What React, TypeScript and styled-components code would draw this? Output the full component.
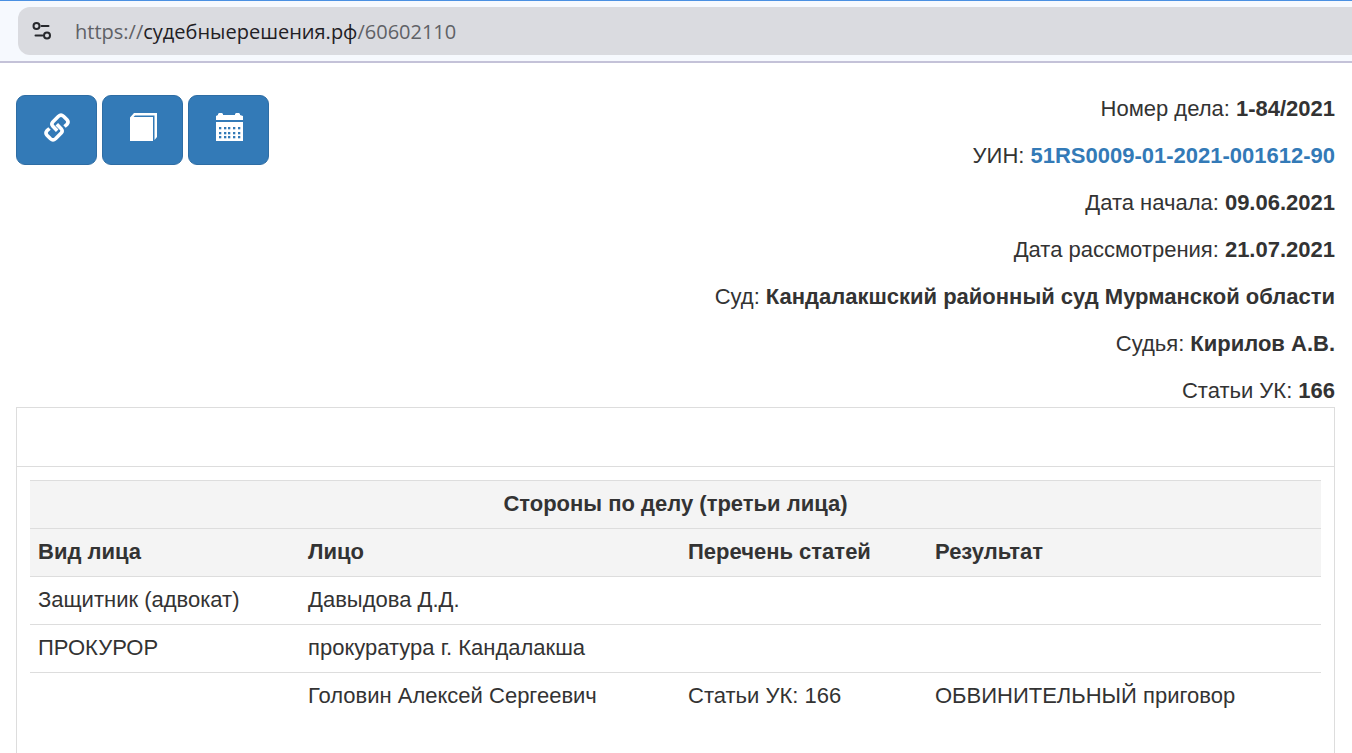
import React from "react";
import styled, { createGlobalStyle } from "styled-components";

const GlobalStyle = createGlobalStyle`
  *, *::before, *::after { box-sizing: border-box; }
  body {
    margin: 0;
    background: #fff;
    color: #333;
    font: 22px/30px "Liberation Sans", Arial, sans-serif;
  }
`;

const Browser = styled.div`
  display: flex;
  flex-direction: column;
  min-height: 100vh;
`;

const Toolbar = styled.header`
  flex: none;
  padding: 6px 0 6px 18px;
  background: #f6f9fe;
  border-top: 1px solid #4a90e2;
  border-bottom: 2px solid #c4c2d8;
`;

const AddressBar = styled.div`
  display: flex;
  align-items: center;
  gap: 23px;
  height: 48px;
  padding-left: 14px;
  background: #dadbe0;
  border-radius: 12px 0 0 12px;
`;

const Address = styled.a`
  padding-top: 2px;
  color: #5f6166;
  font: 20px/28px "Open Sans", "Noto Sans", sans-serif;
  text-decoration: none;
  white-space: nowrap;
`;

const Host = styled.span`
  color: #1f2024;
`;

const Page = styled.main`
  flex: 1;
  display: flex;
  flex-direction: column;
  padding: 31px 17px 0 16px;
`;

const Summary = styled.section`
  display: flex;
  justify-content: space-between;
  align-items: flex-start;
`;

const Actions = styled.div`
  display: flex;
  gap: 5px;
  padding-top: 1px;
`;

const ActionButton = styled.button`
  display: flex;
  justify-content: center;
  align-items: center;
  width: 81px;
  height: 70px;
  padding: 0 0 6px;
  background: #337ab7;
  border: 1px solid #2e6da4;
  border-radius: 9px;
`;

const Details = styled.dl`
  display: flex;
  flex-direction: column;
  gap: 17px;
  margin: 0;
  text-align: right;
`;

const Detail = styled.div`
  display: flex;
  justify-content: flex-end;
  gap: 6px;
`;

const Value = styled.dd`
  margin: 0;
  font-weight: bold;
`;

const ValueLink = styled.a`
  color: #337ab7;
  text-decoration: none;
`;

const Panel = styled.section`
  flex: 1;
  margin-top: 1px;
  border: 1px solid #ddd;
  border-bottom: 0;
`;

const PanelHead = styled.div`
  height: 59px;
  border-bottom: 1px solid #ddd;
`;

const PanelBody = styled.div`
  padding: 13px;
`;

const Parties = styled.table`
  width: 100%;
  border-collapse: collapse;
  table-layout: fixed;
`;

const Column = styled.col<{ $width?: number }>`
  width: ${({ $width }) => ($width ? `${$width}px` : "auto")};
`;

const Row = styled.tr<{ $head?: boolean }>`
  height: 48px;
  background: ${({ $head }) => ($head ? "#f4f4f4" : "transparent")};
  border-top: 1px solid #ddd;
`;

const Title = styled.th`
  padding: 0 8px 2px;
  text-align: center;
`;

const HeadCell = styled.th`
  padding: 0 8px 2px;
  text-align: left;
`;

const Cell = styled.td`
  padding: 0 8px 2px;
`;

const TuneIcon = () => (
  <svg width="20" height="20" viewBox="0 0 20 20" fill="none" stroke="#26282c" strokeWidth="2" strokeLinecap="round" aria-hidden="true">
    <circle cx="4.500" cy="5" r="3" />
    <path d="M9.500 5H16.500" />
    <circle cx="15" cy="14.500" r="3" />
    <path d="M3.500 14.500H10.500" />
  </svg>
);

const LinkIcon = () => (
  <svg width="28" height="30" viewBox="0 0 28 30" fill="none" stroke="#fff" strokeWidth="3.600" strokeLinejoin="round" aria-hidden="true">
    <path d="M14.200 18.700L9.600 14Q8 12 9.800 10L15.500 4.300Q18 2 20.500 4.300L24 7.800Q26 10 24 12.300L21.500 14.500" />
    <path d="M13.800 12.300L18.400 17Q20 19 18.200 21L12.500 26.700Q10 29 7.500 26.700L4 23.200Q2 21 4 18.700L6.500 16.500" />
  </svg>
);

const BookIcon = () => (
  <svg width="28" height="30" viewBox="0 0 28 30" fill="#fff" aria-hidden="true">
    <path d="M1 5.500L5 1H28V25L25.500 28V3.500H6L4.500 5H24V29H1Z" />
  </svg>
);

const CalendarIcon = () => (
  <svg width="28" height="30" viewBox="0 0 28 30" aria-hidden="true">
    <path fill="#fff" d="M1 8V4L3 3V2L4 1H7L8 2V3H20V2L21 1H24L25 2V3L28 4V8ZM1 10H28V29H1Z" />
    <g fill="#337ab7">
      {[15, 20, 24].map((y) =>
        [4, 9, 13, 18, 23].map((x) => <rect key={`${x}-${y}`} x={x} y={y} width="2.300" height="2.300" />)
      )}
    </g>
  </svg>
);

const details: { label: string; value: string; href?: string }[] = [
  { label: "Номер дела", value: "1-84/2021" },
  { label: "УИН", value: "51RS0009-01-2021-001612-90", href: "#uin" },
  { label: "Дата начала", value: "09.06.2021" },
  { label: "Дата рассмотрения", value: "21.07.2021" },
  { label: "Суд", value: "Кандалакшский районный суд Мурманской области" },
  { label: "Судья", value: "Кирилов А.В." },
  { label: "Статьи УК", value: "166" },
];

const columns = ["Вид лица", "Лицо", "Перечень статей", "Результат"];

const parties = [
  ["Защитник (адвокат)", "Давыдова Д.Д.", "", ""],
  ["ПРОКУРОР", "прокуратура г. Кандалакша", "", ""],
  ["", "Головин Алексей Сергеевич", "Статьи УК: 166", "ОБВИНИТЕЛЬНЫЙ приговор"],
];

export default function App() {
  return (
    <Browser>
      <GlobalStyle />
      <Toolbar>
        <AddressBar>
          <TuneIcon />
          <Address href="#top">
            https://<Host>судебныерешения.рф</Host>/60602110
          </Address>
        </AddressBar>
      </Toolbar>
      <Page>
        <Summary>
          <Actions>
            <ActionButton type="button" aria-label="Ссылка"><LinkIcon /></ActionButton>
            <ActionButton type="button" aria-label="Документ"><BookIcon /></ActionButton>
            <ActionButton type="button" aria-label="Календарь"><CalendarIcon /></ActionButton>
          </Actions>
          <Details>
            {details.map(({ label, value, href }) => (
              <Detail key={label}>
                <dt>{label}:</dt>
                <Value>{href ? <ValueLink href={href}>{value}</ValueLink> : value}</Value>
              </Detail>
            ))}
          </Details>
        </Summary>
        <Panel>
          <PanelHead />
          <PanelBody>
            <Parties>
              <colgroup>
                <Column $width={270} />
                <Column $width={380} />
                <Column $width={247} />
                <Column />
              </colgroup>
              <thead>
                <Row $head>
                  <Title colSpan={4}>Стороны по делу (третьи лица)</Title>
                </Row>
                <Row $head>
                  {columns.map((name) => (
                    <HeadCell key={name} scope="col">{name}</HeadCell>
                  ))}
                </Row>
              </thead>
              <tbody>
                {parties.map((party, index) => (
                  <Row key={index}>
                    {party.map((text, column) => (
                      <Cell key={column}>{text}</Cell>
                    ))}
                  </Row>
                ))}
              </tbody>
            </Parties>
          </PanelBody>
        </Panel>
      </Page>
    </Browser>
  );
}
